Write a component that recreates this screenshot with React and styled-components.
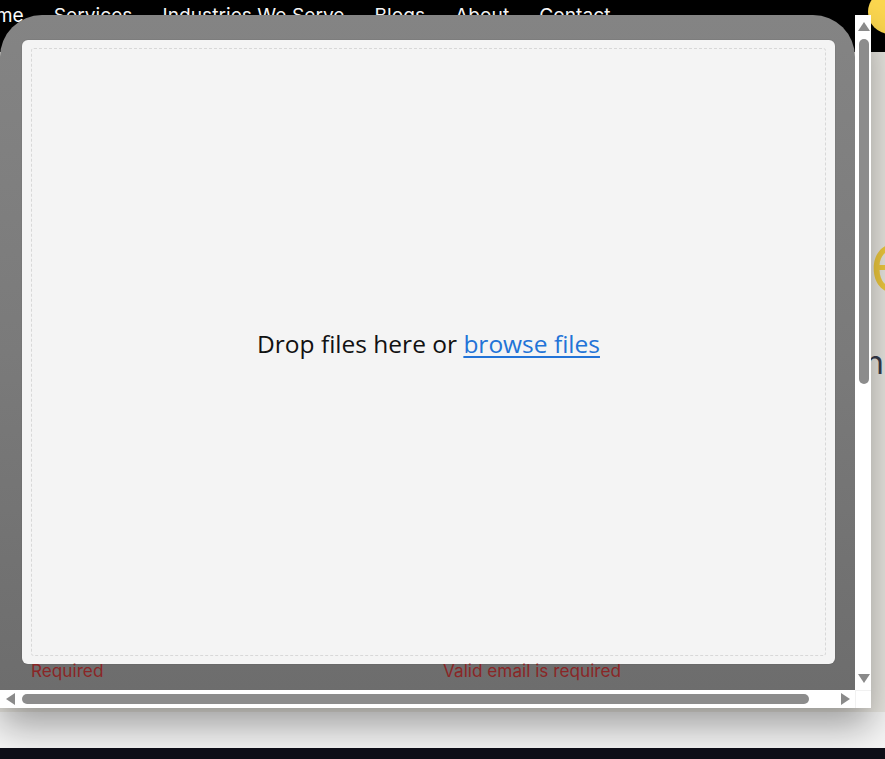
import React from "react";
import styled, { createGlobalStyle } from "styled-components";

const GlobalStyle = createGlobalStyle`
  html, body {
    margin: 0;
    padding: 0;
    overflow: hidden;
  }
  body {
    font-family: "Inter", "Liberation Sans", sans-serif;
    background: #0f0f18;
  }
  *, *::before, *::after {
    box-sizing: border-box;
  }
`;

const Page = styled.div`
  position: relative;
  width: 885px;
  height: 759px;
  overflow: hidden;
  display: flex;
  flex-direction: column;
`;

const NavBar = styled.nav`
  flex: 0 0 52px;
  background: #000;
  display: flex;
  align-items: flex-start;
`;

const NavLinks = styled.ul`
  list-style: none;
  margin: 0 0 0 -30px;
  padding: 3px 0 0;
  display: flex;
  gap: 30px;
`;

const NavLink = styled.li`
  color: #fff;
  font-size: 19.2px;
  line-height: 24px;
  white-space: nowrap;
`;

const Avatar = styled.span`
  flex: 0 0 44px;
  height: 44px;
  margin: -10px -27px 0 auto;
  border-radius: 50%;
  background: #fcd74f;
`;

const Hero = styled.section`
  flex: 0 0 660px;
  background: #e9e7e1;
  padding: 166px 0 0 869px;
  display: flex;
  flex-direction: column;
  overflow: hidden;
  white-space: nowrap;
`;

const HeroMark = styled.div`
  font-size: 86px;
  line-height: 1;
  font-weight: 300;
  color: #efca3f;
`;

const HeroTagline = styled.div`
  margin: 43px 0 0 -4px;
  font-size: 32px;
  line-height: 1;
  color: #363b4c;
`;

const Band = styled.section`
  flex: 0 0 36px;
  background: #f6f6f6;
`;

const Footer = styled.footer`
  flex: 1;
  background: #0f0f18;
`;

/* modal window with its own scrollbars, lying over the page */
const Frame = styled.div`
  position: absolute;
  top: 15px;
  left: 0;
  width: 871px;
  height: 693px;
  display: grid;
  grid-template-columns: 855px 16px;
  grid-template-rows: 675px 18px;
  box-shadow: 0 18px 36px rgba(0, 0, 0, 0.36);
`;

const Overlay = styled.div`
  grid-area: 1 / 1;
  background: linear-gradient(180deg, #848484 0%, #7a7a7a 50%, #6d6d6d 100%);
  border-radius: 42px 42px 0 0;
  padding: 25px 20px 0 22px;
  display: flex;
  flex-direction: column;
  overflow: hidden;
`;

const Panel = styled.div`
  flex: 0 0 624px;
  background: #f4f4f4;
  border-radius: 6px;
  padding: 8px 9px;
  display: flex;
  box-shadow: 0 0 0 1px rgba(0, 0, 0, 0.04);
`;

const DropZone = styled.div`
  flex: 1;
  border: 1px dashed #d8d8d8;
  border-radius: 3px;
  display: flex;
  align-items: center;
  justify-content: center;
  padding-bottom: 18px;
  font-family: "Open Sans", "Noto Sans", sans-serif;
  font-size: 24.5px;
  color: #111;
`;

const BrowseLink = styled.a`
  color: #2273d7;
  text-decoration: underline;
  text-underline-offset: 3px;
  cursor: pointer;
`;

const ErrorRow = styled.div`
  display: grid;
  grid-template-columns: 412px 1fr;
  padding-left: 9px;
  margin-top: -1px;
`;

const ErrorText = styled.span`
  font-size: 17.2px;
  line-height: 16px;
  color: #8a2626;
`;

const VScroll = styled.div`
  grid-area: 1 / 2;
  background: #fff;
  display: flex;
  flex-direction: column;
  align-items: center;
  padding: 7px 0 7px 2px;
`;

const HScroll = styled.div`
  grid-area: 2 / 1;
  background: #fff;
  display: flex;
  align-items: center;
  padding: 0 5px 0 6px;
`;

const Thumb = styled.div`
  background: #8c8c8c;
  border-radius: 6px;
  ${(p) =>
    p.$vertical
      ? `width: 10px; height: 345px; margin-top: 8px;`
      : `height: 10px; width: 787px; margin-left: 7px;`}
`;

const Spacer = styled.div`
  flex: 1;
`;

const Corner = styled.div`
  grid-area: 2 / 2;
  background: #fff;
  border-left: 1px solid #f1f1f1;
  border-top: 1px solid #f1f1f1;
`;

const arrows = {
  up: "0,9 6,0 12,9",
  down: "0,0 12,0 6,9",
  left: "9,0 9,12 0,6",
  right: "0,0 9,6 0,12",
};

const Arrow = ({ dir }) => {
  const flat = dir === "up" || dir === "down";
  return (
    <svg width={flat ? 12 : 9} height={flat ? 9 : 12} viewBox={flat ? "0 0 12 9" : "0 0 9 12"}>
      <polygon points={arrows[dir]} fill="#8a8a8a" />
    </svg>
  );
};

const navItems = ["Home", "Services", "Industries We Serve", "Blogs", "About", "Contact"];

export default function App() {
  return (
    <Page>
      <GlobalStyle />
      <NavBar>
        <NavLinks>
          {navItems.map((item) => (
            <NavLink key={item}>{item}</NavLink>
          ))}
        </NavLinks>
        <Avatar />
      </NavBar>
      <Hero>
        <HeroMark>e</HeroMark>
        <HeroTagline>nc</HeroTagline>
      </Hero>
      <Band />
      <Footer />

      <Frame>
        <Overlay>
          <Panel>
            <DropZone>
              <span>
                Drop files here or <BrowseLink>browse files</BrowseLink>
              </span>
            </DropZone>
          </Panel>
          <ErrorRow>
            <ErrorText>Required</ErrorText>
            <ErrorText>Valid email is required</ErrorText>
          </ErrorRow>
        </Overlay>
        <VScroll>
          <Arrow dir="up" />
          <Thumb $vertical />
          <Spacer />
          <Arrow dir="down" />
        </VScroll>
        <HScroll>
          <Arrow dir="left" />
          <Thumb />
          <Spacer />
          <Arrow dir="right" />
        </HScroll>
        <Corner />
      </Frame>
    </Page>
  );
}
